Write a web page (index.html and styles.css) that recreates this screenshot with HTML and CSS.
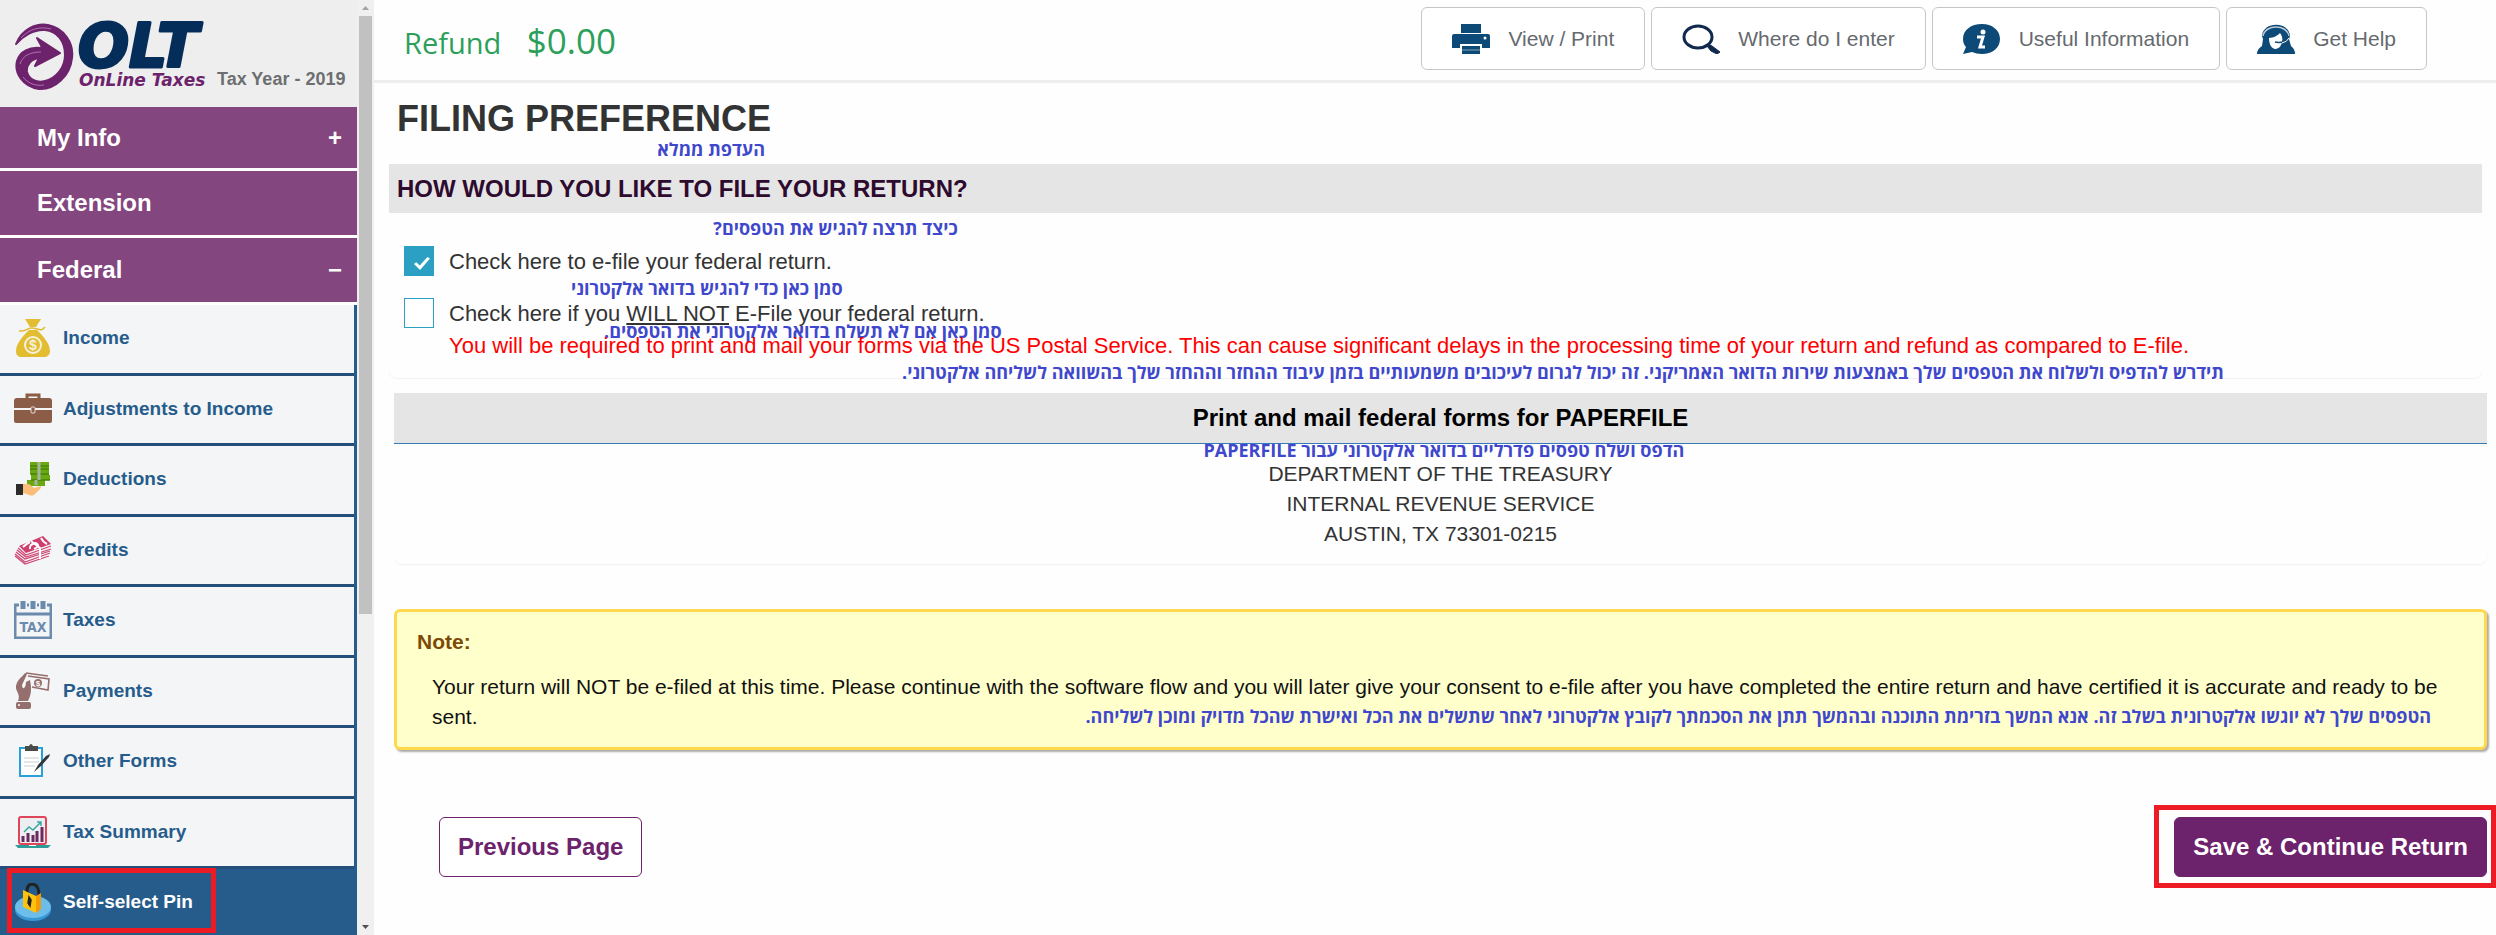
FILE: index.html
```html
<!DOCTYPE html>
<html lang="en">
<head>
  <meta charset="UTF-8">
  <meta name="viewport" content="width=device-width, initial-scale=1.0">
  <title>Filing Preference - OLT OnLine Taxes</title>
  <link rel="stylesheet" href="styles.css">
</head>
<body>
  <aside class="sidebar">
    <div class="brand">
      <svg class="logo" width="203" height="76" viewBox="0 0 203 76" role="img" aria-label="OLT OnLine Taxes">
        <path d="M2 29 C8 14 22 8 34 10 C50 13 60 28 58 43 C56 61 41 75 25 74 C9 72 0 58 3 46 C6 36 16 32 26 33 L28 32 L23 23 L46 38 L21 51 L25 43 C17 44 12 50 13 57 C15 65 23 68 31 66 C43 63 51 52 51 40 C51 26 43 16 31 15 C20 14 9 21 2 29 Z" fill="#6d226c" stroke="#6d226c" stroke-width="2" stroke-linejoin="round"/>
        <path d="M7 23 C15 14 26 11 37 14 M6 49 C9 40 17 37 27 37 M9 62 C15 70 24 71 30 70" fill="none" stroke="#b06fb0" stroke-width="1"/>
        <text x="64" y="52" class="logo-olt">OLT</text>
        <text x="65" y="71" class="logo-sub">OnLine Taxes</text>
      </svg>
      <span class="tax-year">Tax Year - 2019</span>
    </div>
    <nav>
      <a href="#" class="menu">My Info <span>+</span></a>
      <a href="#" class="menu">Extension</a>
      <a href="#" class="menu">Federal <span>−</span></a>
      <div class="submenu">
        <a href="#" class="item">
          <svg width="38" height="38" viewBox="0 0 38 38"><path d="M11 0 L27 0 L22 8 L16 8 Z M15 11 H23 C28 16 36 24 36 32 C36 36 33 38 30 38 H8 C4 38 2 36 2 32 C2 24 10 16 15 11 Z" fill="#e2bd32"/><path d="M5 12 C12 13 14 8 19 9 C25 10 27 13 31 8" fill="none" stroke="#e2bd32" stroke-width="1.5"/><circle cx="19" cy="26" r="8" fill="none" stroke="#f6f1dc" stroke-width="2"/><text x="19" y="31" text-anchor="middle" class="dollar">$</text></svg>
          Income
        </a>
        <a href="#" class="item">
          <svg width="38" height="38" viewBox="0 0 38 38"><path d="M13 8 V5 H25 V8" fill="none" stroke="#8b5d46" stroke-width="3"/><path d="M3 8 H35 Q38 8 38 11 V18 H0 V11 Q0 8 3 8 Z M0 20 H38 V31 Q38 33 36 33 H2 Q0 33 0 31 Z" fill="#8b5d46"/><rect x="17" y="17" width="4" height="6" rx="1" fill="#8b5d46" stroke="#e8dfda"/></svg>
          Adjustments to Income
        </a>
        <a href="#" class="item">
          <svg width="38" height="38" viewBox="0 0 38 38"><path d="M16 2 H35 V15 H36 V20 H31 V26 H13 V20 H17 V15 H16 Z" fill="#6ba812"/><path d="M16 6 H35 M16 9 H35 M17 14 H35 M17 20 H36" stroke="#47850b" stroke-width="1.5"/><path d="M25 2 V20 M22 20 V25" stroke="#a9b3a1" stroke-width="3"/><path d="M9 24 H15 L20 28 L27 26 C28 28 22 33 20 35 C16 37 12 33 9 33 Z" fill="#fbbd78"/><rect x="2" y="24" width="7" height="11" fill="#2b2b2b"/></svg>
          Deductions
        </a>
        <a href="#" class="item">
          <svg width="38" height="38" viewBox="0 0 38 38"><path d="M5 15 L29 5 L37 13 L12 22 Z" fill="#cf3f6e"/><path d="M9 16 Q12 13 16 11 M27 7 Q29 11 33 13 M16 18 Q15 13 22 12 Q27 15 20 18" fill="none" stroke="#fff" stroke-width="2"/><path d="M4 17 L12 24 L37 15 M3 19 L12 26 L37 18 M2 21 L11 28 L36 20 M1 23 L11 31 L36 22 M1 25 L11 33 L35 25" fill="none" stroke="#cf4a76" stroke-width="1.3"/><path d="M17 10 L26 17 V28" fill="none" stroke="#fff" stroke-width="2"/></svg>
          Credits
        </a>
        <a href="#" class="item">
          <svg width="38" height="38" viewBox="0 0 38 38"><path d="M1 4 H37 V37 H1 Z M1 13 H37" fill="none" stroke="#6b8aad" stroke-width="3"/><path d="M9 0 V8 M19 0 V8 M29 0 V8" stroke="#f4f5f7" stroke-width="8"/><path d="M9 0 V8 M19 0 V8 M29 0 V8" stroke="#6b8aad" stroke-width="5"/><text x="19" y="31" text-anchor="middle" class="tax-word">TAX</text></svg>
          Taxes
        </a>
        <a href="#" class="item">
          <svg width="38" height="38" viewBox="0 0 38 38"><path d="M4 29 C7 22 1 19 2 14 C3 8 8 5 11 1 L13 2 L8 13 C8 18 12 17 12 10 L16 8 C18 18 17 23 14 29 Z" fill="#956e6e"/><rect x="2" y="30" width="15" height="7" rx="2" fill="#956e6e"/><circle cx="5" cy="33" r="1" fill="#fff"/><path d="M12 1 L34 4 M14 4 L35 7 L34 18 L18 15" fill="none" stroke="#956e6e" stroke-width="1.6"/><circle cx="24" cy="11" r="4" fill="#956e6e"/><text x="24" y="14" text-anchor="middle" class="coin">$</text></svg>
          Payments
        </a>
        <a href="#" class="item">
          <svg width="38" height="38" viewBox="0 0 38 38"><rect x="6" y="6" width="22" height="28" fill="#fff" stroke="#2a9fd8" stroke-width="2"/><path d="M11 9 V4 H15 Q17 0 19 4 H24 V9 Z" fill="#4a4a4a"/><path d="M10 16 H25 M10 20 H25 M10 24 H21" stroke="#c9ced2" stroke-width="1"/><path d="M20 30 L24 23 L32 14 L36 12 L35 15 L27 24 Z" fill="#2f3538"/></svg>
          Other Forms
        </a>
        <a href="#" class="item">
          <svg width="38" height="38" viewBox="0 0 38 38"><rect x="5" y="4" width="27" height="27" rx="2" fill="#eceff1" stroke="#e0455a" stroke-width="2"/><path d="M9 29 V23 M14 29 V20 M19 29 V22 M23 29 V18 M28 29 V14" stroke="#6d2a5e" stroke-width="3"/><path d="M10 19 L15 14 L19 17 L27 9 M23 9 H27 V13" fill="none" stroke="#3aa6a0" stroke-width="1.5"/><path d="M1 32 H37 L34 35 H4 Z" fill="#2f9d97"/><path d="M15 32 H22 V33 H15 Z" fill="#fff"/></svg>
          Tax Summary
        </a>
        <a href="#" class="item active">
          <svg width="38" height="38" viewBox="0 0 38 38"><ellipse cx="19" cy="27" rx="18" ry="11" fill="#3797d4"/><ellipse cx="19" cy="24" rx="18" ry="11" fill="#6cbdea"/><path d="M13 12 V8 Q13 1 19 1 Q25 2 25 13" fill="none" stroke="#222" stroke-width="3"/><path d="M9 7 L22 13 V30 L9 24 Z" fill="#fdc20d"/><path d="M22 13 L27 10 V26 L22 30 Z" fill="#f39a08"/><path d="M15 14 L17 17 L16 23 L14 20 Z" fill="#222" stroke="#222" stroke-width="1.5"/></svg>
          Self-select Pin
          <span class="mark mark-pin"></span>
        </a>
      </div>
    </nav>
  </aside>

  <div class="scrollbar">
    <svg width="17" height="16" viewBox="0 0 17 16"><path d="M5 10 L8.500 6 L12 10 Z" fill="#a3a3a3"/></svg>
    <div class="thumb"></div>
    <svg width="17" height="16" viewBox="0 0 17 16"><path d="M5 6 L8.500 10 L12 6 Z" fill="#505050"/></svg>
  </div>

  <main>
    <header class="topbar">
      <div class="refund">Refund <span>$0.00</span></div>
      <div class="tools">
        <button type="button">
          <svg width="38" height="30" viewBox="0 0 38 30"><path d="M9 0 H29 V9 H9 Z M2 10 H36 Q38 10 38 12 V24 H30 V20 H8 V24 H0 V12 Q0 10 2 10 Z M10 22 H28 V30 H10 Z" fill="#0e4a77"/><path d="M10 26 H28" stroke="#7fa0ba"/><circle cx="33" cy="14" r="1.500" fill="#fff"/></svg>
          View / Print
        </button>
        <button type="button">
          <svg width="38" height="30" viewBox="0 0 38 30"><ellipse cx="16" cy="13" rx="14" ry="11" fill="none" stroke="#10294d" stroke-width="3"/><path d="M26 20 L30 22 L38 28 L35 30 L29 27 L25 22 Z" fill="#10294d" stroke="#10294d"/></svg>
          Where do I enter
        </button>
        <button type="button">
          <svg width="38" height="30" viewBox="0 0 38 30"><path d="M19 0 C29 0 37 6 37 15 C37 24 29 30 19 30 C15 30 12 29 9 28 L0 30 L3 23 C1 21 0 18 0 15 C0 6 8 0 19 0 Z" fill="#0e4a77"/><circle cx="20" cy="8" r="2.500" fill="#fff"/><path d="M14 13 H20 L17 23 H22" fill="none" stroke="#fff" stroke-width="3"/></svg>
          Useful Information
        </button>
        <button type="button">
          <svg width="38" height="30" viewBox="0 0 38 30"><path d="M5 12 C6 -3 32 -3 33 12 L32 15 L34 22 Q38 25 38 30 H0 Q0 25 5 22 L6 15 Z" fill="#0e4a77"/><path d="M6 12 C8 0 30 0 32 12" fill="none" stroke="#b9cbd9" stroke-width="1.500"/><path d="M12 14 C17 14 21 11 23 9 C25 12 26 14 25 18 C24 23 21 25 18 25 C14 24 12 20 12 14 Z" fill="#fff"/><path d="M18 18 C23 19 28 18 32 14" fill="none" stroke="#0e4a77" stroke-width="1.500"/><path d="M25 19 Q30 18 32 14" fill="none" stroke="#fff"/></svg>
          Get Help
        </button>
      </div>
    </header>

    <h1><span class="line">FILING PREFERENCE<span class="he he-title" lang="he" dir="rtl">העדפת ממלא</span></span></h1>

    <section class="choices">
      <h2><span class="line">HOW WOULD YOU LIKE TO FILE YOUR RETURN?<span class="he he-question" lang="he" dir="rtl">כיצד תרצה להגיש את הטפסים?</span></span></h2>
      <div class="choices-body">
        <div class="choice">
          <input type="checkbox" id="efile" checked>
          <label for="efile" class="line">Check here to e-file your federal return.<span class="he he-efile" lang="he" dir="rtl">סמן כאן כדי להגיש בדואר אלקטרוני</span></label>
        </div>
        <div class="choice">
          <input type="checkbox" id="no-efile">
          <div>
            <label for="no-efile" class="line">Check here if you <u>WILL NOT</u> E-File your federal return.<span class="he he-paper" lang="he" dir="rtl">סמן כאן אם לא תשלח בדואר אלקטרוני את הטפסים.</span></label>
            <p class="warning"><span class="line">You will be required to print and mail your forms via the US Postal Service. This can cause significant delays in the processing time of your return and refund as compared to E-file.<span class="he he-warning" lang="he" dir="rtl">תידרש להדפיס ולשלוח את הטפסים שלך באמצעות שירות הדואר האמריקני. זה יכול לגרום לעיכובים משמעותיים בזמן עיבוד ההחזר וההחזר שלך בהשוואה לשליחה אלקטרוני.</span></span></p>
          </div>
        </div>
      </div>
    </section>

    <section class="mailing">
      <h3><span class="line">Print and mail federal forms for PAPERFILE<span class="he he-mail" lang="he" dir="rtl">הדפס ושלח טפסים פדרליים בדואר אלקטרוני עבור PAPERFILE</span></span></h3>
      <address>
        DEPARTMENT OF THE TREASURY<br>
        INTERNAL REVENUE SERVICE<br>
        AUSTIN, TX 73301-0215
      </address>
    </section>

    <section class="note">
      <strong>Note:</strong>
      <p>Your return will NOT be e-filed at this time. Please continue with the software flow and you will later give your consent to e-file after you have completed the entire return and have certified it is accurate and ready to be sent.</p>
      <span class="he he-note" lang="he" dir="rtl">הטפסים שלך לא יוגשו אלקטרונית בשלב זה. אנא המשך בזרימת התוכנה ובהמשך תתן את הסכמתך לקובץ אלקטרוני לאחר שתשלים את הכל ואישרת שהכל מדויק ומוכן לשליחה.</span>
    </section>

    <div class="actions">
      <button type="button" class="btn btn-prev">Previous Page</button>
      <div class="save">
        <button type="button" class="btn btn-save">Save &amp; Continue Return</button>
        <span class="mark mark-save"></span>
      </div>
    </div>
  </main>
</body>
</html>
```

FILE: styles.css
```css
* {
  box-sizing: border-box;
}
body {
  margin: 0;
  display: flex;
  height: 100vh;
  overflow: hidden;
  font-family: "Liberation Sans", Arial, sans-serif;
  color: #333;
  background: #fefefe;
}
a {
  text-decoration: none;
}
svg {
  flex: none;
}

/* sidebar */
.sidebar {
  flex: none;
  width: 357px;
  background: #eee;
  overflow: hidden;
}
.brand {
  display: flex;
  align-items: flex-end;
  height: 107px;
  padding: 0 0 16px 14px;
}
.logo-olt {
  font: italic bold 60px "DejaVu Sans", Verdana, sans-serif;
  fill: #042d59;
  stroke: #042d59;
  stroke-width: 3px;
  stroke-linejoin: round;
}
.logo-sub {
  font: italic bold 17px "DejaVu Sans", Verdana, sans-serif;
  fill: #6d226c;
}
.tax-year {
  font-size: 18px;
  font-weight: bold;
  line-height: 24px;
  color: #6d6e71;
  white-space: nowrap;
}
.menu {
  display: flex;
  justify-content: space-between;
  padding: 0 15px 0 37px;
  line-height: 64px;
  font-size: 24px;
  font-weight: bold;
  color: #fff;
  background: #83467e;
  border-bottom: 3px solid #fff;
}
.menu:first-child {
  line-height: 61px;
}
.submenu {
  border-right: 3px solid #265c8b;
}
.item {
  position: relative;
  display: flex;
  align-items: center;
  gap: 11px;
  height: 70px;
  padding: 0 0 2px 14px;
  font-size: 19px;
  font-weight: bold;
  color: #265c8b;
  background: #f4f5f7;
  border-bottom: 3px solid #244f7a;
}
.item:nth-child(odd) {
  height: 71px;
}
.item.active {
  margin-right: -3px;
  color: #fff;
  background: #265c8b;
  border-bottom-color: #265c8b;
}
.dollar {
  font-size: 14px;
  font-weight: bold;
  fill: #f6f1dc;
}
.coin {
  font-size: 8px;
  font-weight: bold;
  fill: #fff;
}
.tax-word {
  font-family: "DejaVu Sans Condensed", "DejaVu Sans", sans-serif;
  font-size: 14px;
  font-weight: bold;
  fill: #6b8aad;
}
.scrollbar {
  flex: none;
  display: flex;
  flex-direction: column;
  width: 17px;
  background: #f0f0f0;
}
.thumb {
  flex: none;
  height: 64%;
  margin: 0 2px auto;
  background: #c1c1c1;
}

/* top bar */
main {
  flex: 1;
  min-width: 0;
}
.topbar {
  display: flex;
  justify-content: space-between;
  height: 83px;
  padding: 7px 69px 0 30px;
  border-bottom: 3px solid #eee;
}
.refund {
  font-family: "Open Sans", "Segoe UI", sans-serif;
  font-size: 29px;
  font-weight: 500;
  line-height: 68px;
  color: #2ca05a;
}
.refund span {
  margin-left: 18px;
  font-size: 35px;
}
.tools {
  display: flex;
  gap: 6px;
}
.tools button {
  display: flex;
  align-items: center;
  gap: 18px;
  height: 63px;
  padding: 0 30px;
  font: 21px "Liberation Sans", Arial, sans-serif;
  color: #666a6e;
  background: #fff;
  border: 1px solid #c6c6c6;
  border-radius: 6px;
}

/* content */
h1 {
  margin: 15px 0 24px 23px;
  font-size: 36px;
  line-height: 42px;
}
h2 {
  margin: 0;
  padding-left: 8px;
  font-size: 24px;
  line-height: 49px;
  color: #2d0a2e;
  background: #e5e5e5;
}
h3 {
  margin: 0;
  font-size: 24px;
  line-height: 50px;
  text-align: center;
  color: #000;
  background: #e5e5e5;
  border-bottom: 1px solid #337ab7;
}
.choices,
.mailing {
  border-radius: 0 0 8px 8px;
  box-shadow: 0 1px 1px #f1f1f1;
}
.choices {
  margin: 0 14px 0 15px;
}
.choices-body {
  display: flex;
  flex-direction: column;
  gap: 20px;
  padding: 33px 0 16px 15px;
}
.choice {
  display: flex;
  gap: 15px;
  font-size: 22px;
  line-height: 32px;
}
.choice input {
  flex: none;
  appearance: none;
  width: 30px;
  height: 30px;
  margin: 0;
  border: 1px solid #2ba0c2;
  background: #fff;
}
.choice input:checked {
  background: #2ba0c2;
}
.choice input:checked::before {
  content: "";
  display: block;
  width: 16px;
  height: 13px;
  margin: 10px 0 0 9px;
  background: #fff;
  clip-path: polygon(0 54%, 14% 40%, 36% 66%, 84% 0, 100% 12%, 38% 100%);
}
.warning {
  margin: 0;
  color: #f00;
}
.mailing {
  margin: 15px 9px 0 20px;
}
address {
  padding: 15px 0;
  font-size: 21px;
  font-style: normal;
  line-height: 30px;
  text-align: center;
}
.note {
  position: relative;
  margin: 45px 9px 0 20px;
  padding: 15px 20px;
  font-size: 21px;
  line-height: 30px;
  color: #111;
  background: #ffc;
  border: 3px solid #ffd94d;
  border-radius: 6px;
  box-shadow: 2px 2px 2px #aaa;
}
.note strong {
  color: #7d4a05;
}
.note p {
  margin: 15px 0 0 15px;
}
.actions {
  display: flex;
  justify-content: space-between;
  margin: 67px 9px 0 65px;
}
.btn {
  height: 60px;
  padding: 0 18px;
  font: bold 24px "Liberation Sans", Arial, sans-serif;
  border: 1px solid #6d226c;
  border-radius: 6px;
}
.btn-prev {
  color: #6d226c;
  background: #fff;
}
.btn-save {
  color: #fff;
  background: #6d226c;
}
.save {
  position: relative;
}

/* hebrew annotations laid over the form */
.line {
  position: relative;
  display: inline-block;
}
.he {
  position: absolute;
  font-family: "Open Sans", "Segoe UI", "DejaVu Sans", sans-serif;
  font-size: 18px;
  font-weight: 700;
  line-height: 24px;
  white-space: nowrap;
  color: #3f48cc;
}
.he-title {
  right: 6px;
  top: 39px;
}
.he-question {
  right: 10px;
  top: 52px;
}
.he-efile {
  left: 122px;
  top: 30px;
}
.he-paper {
  left: 155px;
  top: 21px;
}
.he-warning {
  left: 453px;
  top: 30px;
}
.he-mail {
  right: 4px;
  top: 45px;
}
.he-note {
  right: 53px;
  bottom: 19px;
}

/* red highlight boxes */
.mark {
  position: absolute;
  border: 5px solid #ed1c24;
  pointer-events: none;
}
.mark-pin {
  left: 7px;
  top: -1px;
  width: 209px;
  height: 65px;
}
.mark-save {
  inset: -12px -9px -11px -20px;
}
```
